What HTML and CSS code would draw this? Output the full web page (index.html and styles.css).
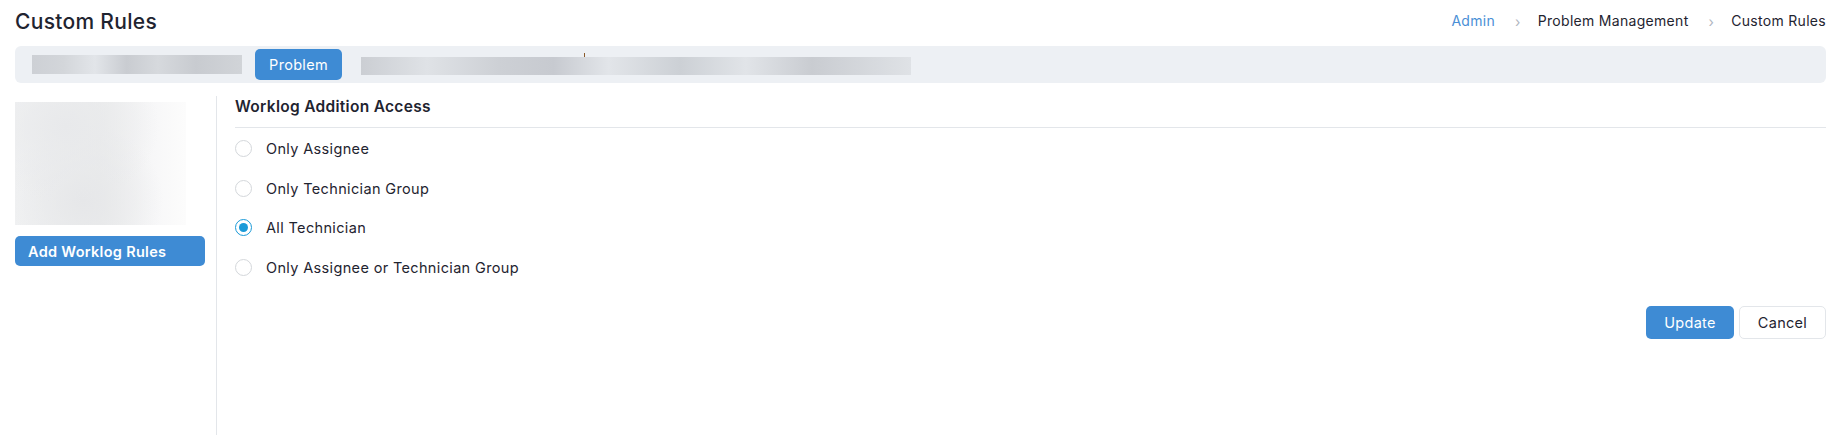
FILE: index.html
```html
<!DOCTYPE html>
<html lang="en">
<head>
    <meta charset="UTF-8">
    <title>Custom Rules</title>
    <link rel="stylesheet" href="styles.css">
</head>
<body>
    <div class="page">
        <div class="page-header">
            <h1>Custom Rules</h1>
            <nav class="breadcrumb">
                <a href="#">Admin</a>
                <span class="sep">&rsaquo;</span>
                <span>Problem Management</span>
                <span class="sep">&rsaquo;</span>
                <span>Custom Rules</span>
            </nav>
        </div>

        <div class="module-bar">
            <div class="blur blur-short"></div>
            <button class="btn btn-primary btn-module">Problem</button>
            <div class="blur blur-long"><span class="tick"></span></div>
        </div>

        <div class="content">
            <aside class="sidebar">
                <div class="blur-box"></div>
                <button class="btn btn-primary btn-add">Add Worklog Rules</button>
            </aside>
            <section class="rules">
                <h2>Worklog Addition Access</h2>
                <div class="options">
                    <label class="option"><span class="radio"></span>Only Assignee</label>
                    <label class="option"><span class="radio"></span>Only Technician Group</label>
                    <label class="option"><span class="radio checked"></span>All Technician</label>
                    <label class="option"><span class="radio"></span>Only Assignee or Technician Group</label>
                </div>
                <div class="actions">
                    <button class="btn btn-primary btn-update">Update</button>
                    <button class="btn btn-cancel">Cancel</button>
                </div>
            </section>
        </div>
    </div>
</body>
</html>
```

FILE: styles.css
```css
:root {
    --primary-color: #3e8bd4;
    --text-color: #1f2430;
    --bar-color: #edf0f4;
    --border-color: #e3e6ea;
    --radio-color: #1a9ad8;
}

* {
    margin: 0;
    padding: 0;
    box-sizing: border-box;
    font-family: 'Inter', 'Open Sans', sans-serif;
}

body {
    background: #fff;
    color: var(--text-color);
}

.page {
    padding: 0 15px;
    height: 435px;
    display: flex;
    flex-direction: column;
}

.page-header {
    height: 40px;
    display: flex;
    align-items: center;
    justify-content: space-between;
    padding-top: 2px;
}

h1 {
    font-size: 21px;
    font-weight: 500;
    letter-spacing: 0.3px;
}

.breadcrumb {
    display: flex;
    align-items: center;
    font-size: 14px;
    letter-spacing: 0.3px;
    margin-top: -2px;
}

.breadcrumb a {
    color: #4a8fd6;
    text-decoration: none;
}

.breadcrumb .sep {
    color: #b0b6bf;
    margin: 2px 17px 0 20px;
    font-size: 14px;
}

.module-bar {
    margin-top: 6px;
    height: 37px;
    background: var(--bar-color);
    border-radius: 6px;
    display: flex;
    align-items: center;
    padding-left: 17px;
}

.blur {
    background: linear-gradient(90deg, #cdd0d5 0%, #d3d6da 15%, #e2e5e9 30%, #c9ccd1 45%, #d6d9dd 60%, #c8cbd0 78%, #d1d4d8 100%);
}

.blur-short {
    width: 210px;
    height: 19px;
    margin-right: 13px;
}

.blur-long {
    width: 550px;
    height: 18px;
    margin-left: 19px;
    margin-top: 3px;
    position: relative;
    background: linear-gradient(90deg, #cbced3 0%, #dfe2e6 12%, #cdd0d5 25%, #c7cad0 35%, #e2e5e9 45%, #ccd0d5 58%, #e1e4e8 70%, #c9ccd1 82%, #dfe2e6 100%);
}

.tick {
    position: absolute;
    left: 223px;
    top: -4px;
    width: 1px;
    height: 4px;
    background: #8a5a2a;
}

.btn {
    border: none;
    border-radius: 5px;
    cursor: pointer;
    font-size: 14px;
    letter-spacing: 0.3px;
}

.btn-primary {
    background: var(--primary-color);
    color: #fff;
}

.btn-module {
    width: 87px;
    height: 31px;
    font-size: 14.5px;
}

.content {
    flex: 1;
    display: flex;
    margin-top: 13px;
}

.sidebar {
    width: 202px;
    border-right: 1.5px solid var(--border-color);
    padding-top: 6px;
}

.blur-box {
    width: 171px;
    height: 123px;
    background:
        radial-gradient(ellipse at 30% 20%, #e8e9eb 0%, transparent 55%),
        radial-gradient(ellipse at 40% 80%, #e6e7e9 0%, transparent 55%),
        linear-gradient(90deg, #f1f2f3 0%, #eceded 50%, #f7f7f8 80%, #fcfcfc 100%);
}

.btn-add {
    margin-top: 11px;
    width: 190px;
    height: 30px;
    text-align: left;
    padding-left: 13px;
    font-size: 14.5px;
    font-weight: 600;
}

.rules {
    flex: 1;
    padding-left: 18px;
}

h2 {
    font-size: 15.5px;
    font-weight: 600;
    letter-spacing: 0.3px;
    height: 32px;
    line-height: 22px;
    border-bottom: 1px solid var(--border-color);
}

.options {
    padding-top: 1px;
}

.option {
    display: flex;
    align-items: center;
    height: 39.5px;
    font-size: 14.5px;
    letter-spacing: 0.35px;
}

.radio {
    width: 17px;
    height: 17px;
    border-radius: 50%;
    border: 1px solid #d4d7db;
    margin-right: 14px;
    display: flex;
    align-items: center;
    justify-content: center;
}

.radio.checked {
    border-color: var(--radio-color);
}

.radio.checked::after {
    content: '';
    width: 9px;
    height: 9px;
    border-radius: 50%;
    background: var(--radio-color);
}

.actions {
    display: flex;
    justify-content: flex-end;
    gap: 5px;
    margin-top: 19px;
}

.btn-update {
    width: 88px;
    height: 33px;
    font-size: 14.5px;
}

.btn-cancel {
    width: 87px;
    height: 33px;
    font-size: 14.5px;
    background: #fff;
    border: 1px solid var(--border-color);
    color: var(--text-color);
}
```
